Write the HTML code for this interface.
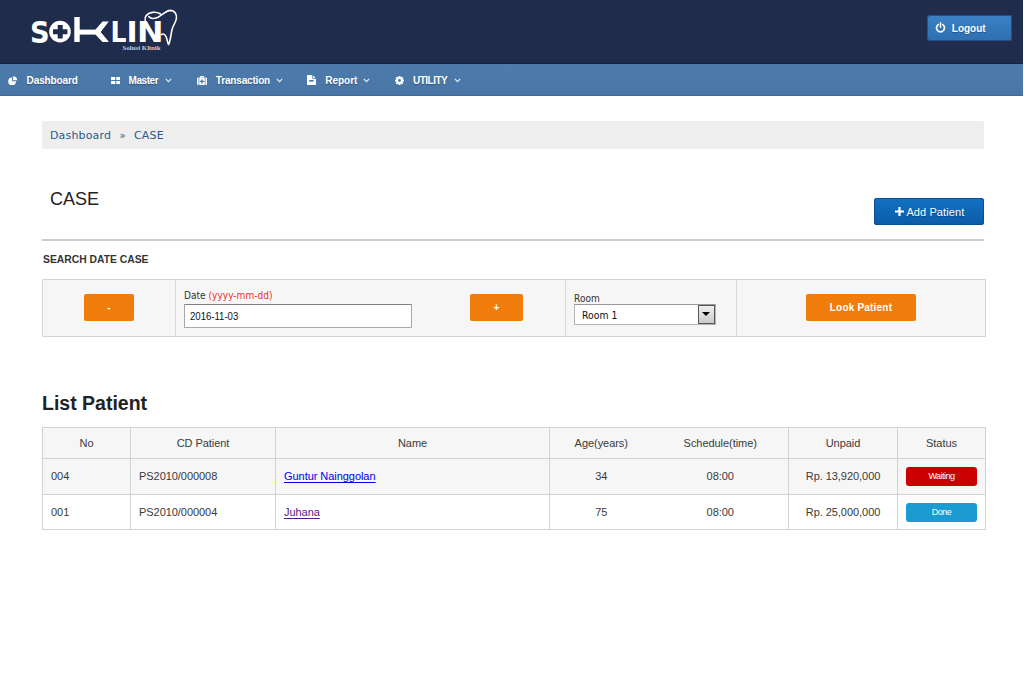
<!DOCTYPE html>
<html lang="en">
<head>
<meta charset="utf-8">
<title>SOKLIN - CASE</title>
<style>
html,body{margin:0;padding:0;background:#fff;}
body{width:1024px;height:680px;position:relative;overflow:hidden;font-family:"Liberation Sans",Arial,sans-serif;font-size:11px;color:#333;}
.abs{position:absolute;}
#header{left:0;top:0;width:1023px;height:64px;background:#1f2c4c;border-bottom:1px solid #18213c;box-sizing:border-box;}
#nav{left:0;top:64px;width:1023px;height:32px;background:linear-gradient(#4d7bac,#4875a5);border-bottom:1px solid #3e6a99;box-sizing:border-box;}
#nav .item{position:absolute;top:1.3px;height:30px;line-height:32px;color:#fff;font-weight:bold;font-size:10px;white-space:nowrap;text-shadow:0 1px 1px rgba(0,0,0,.3);}
#nav svg.ic{position:absolute;}
#logout{left:927px;top:15px;width:85px;height:26px;border-radius:3px;background:linear-gradient(#3a82c4,#2d6fb0);box-shadow:0 0 0 1px #24508a inset;color:#fff;font-weight:bold;font-size:10px;line-height:26px;text-shadow:0 1px 1px rgba(0,0,0,.3);}
#crumb{left:42px;top:121px;width:942px;height:28px;background:#eee;border-radius:2px;font-family:"DejaVu Sans",Verdana,sans-serif;font-size:11px;letter-spacing:.15px;color:#2c5a89;line-height:29.6px;}
#h1{left:50px;top:187px;font-size:18px;color:#222;line-height:24px;}
#add{left:874px;top:198px;width:110px;height:27px;border-radius:3px;background:linear-gradient(#1272c4,#0a5ba6);box-shadow:0 0 0 1px #0a4f92 inset;color:#fff;font-size:11px;line-height:27px;text-align:center;}
#hr{left:42px;top:239px;width:942px;height:2px;background:#ccc;}
#sdc{left:43px;top:251.3px;font-weight:bold;font-size:11px;line-height:16px;color:#333;transform:scale(.94,1.04);transform-origin:0 50%;white-space:nowrap;}
#stable{left:42px;top:279px;width:944px;height:58px;box-sizing:border-box;border:1px solid #d4d4d4;background:#f6f6f6;}
.vline{position:absolute;top:280px;width:1px;height:56px;background:#d9d9d9;}
.obtn{position:absolute;background:#f07c0b;border-radius:2px;color:#fff;font-weight:bold;font-size:10px;text-align:center;}
#lp{left:42px;top:389.7px;font-size:19.5px;font-weight:bold;color:#222;line-height:26px;}
#ltable{left:42px;top:427px;width:943px;height:102px;}

.lbl{position:absolute;font-family:"DejaVu Sans",Verdana,sans-serif;font-size:9.7px;color:#333;line-height:14px;white-space:nowrap;transform:scaleX(.935);transform-origin:0 50%;}
#dinput{left:184px;top:303.5px;width:228px;height:24px;box-sizing:border-box;border:1px solid #a8a8a8;border-top-color:#808080;background:#fff;border-radius:1px;}
#dinput span{position:absolute;left:4.8px;top:1.6px;line-height:22px;font-family:"Liberation Sans",Arial,sans-serif;font-size:10.2px;color:#111;transform:scaleX(.94);transform-origin:0 50%;}
#sel{left:574px;top:304px;width:142px;height:20.5px;box-sizing:border-box;border:1px solid #b5b5b5;border-top-color:#9a9a9a;background:#fff;}
#sel span{position:absolute;left:7.4px;top:1.6px;line-height:18px;font-family:"DejaVu Sans",Verdana,sans-serif;font-size:10px;color:#111;transform:scaleX(.93);transform-origin:0 50%;}
#sel i{position:absolute;right:0;top:0;width:17px;height:18.5px;box-sizing:border-box;border:1px solid #555;background:linear-gradient(#eee,#ccc);}
#sel i:after{content:"";position:absolute;left:3px;top:6px;border:4px solid transparent;border-top:4px solid #000;border-bottom:0;}
#ltable{border-collapse:collapse;table-layout:fixed;}
#ltable td,#ltable th{border:1px solid #d2d2d2;font-weight:normal;font-size:11px;color:#3a3a3a;padding:0;height:35px;letter-spacing:-.05px;}
#ltable th{height:30px;background:#f6f6f6;text-align:center;}
#ltable tr.odd td{background:#f6f6f6;}
#ltable td.l{text-align:left;padding-left:8px;}
#ltable td.c{text-align:center;}
#ltable td>span.t,#ltable td>a{position:relative;top:-1px;}
#ltable tr.last td>span.t,#ltable tr.last td>a{top:0;}
#ltable .nb{border-right:none;} #ltable .nbl{border-left:none;}
#ltable a{color:#0000ee;text-decoration:underline;text-decoration-skip-ink:none;text-underline-offset:1.5px;}
#ltable tr.last td{height:34px;}
#ltable a.v{color:#551a8b;}
.badge{display:block;margin:0 auto;width:71px;height:19px;line-height:19px;border-radius:3px;color:#fff;font-size:9px;letter-spacing:-.5px;text-align:center;}
</style>
</head>
<body>
<div id="header" class="abs"></div>

<svg id="logo" class="abs" style="left:0;top:0;" width="200" height="64" viewBox="0 0 200 64" role="img" aria-label="SOKLIN Solusi Klinik">
<title>SOKLIN Solusi Klinik</title>
<g fill="#fff" font-family="'DejaVu Sans','Liberation Sans',sans-serif" font-weight="bold" font-size="28.8px">
<text id="lS" transform="translate(30.1,42.5) scale(0.92,1)" font-size="29.6px">S</text>
<circle cx="60" cy="31.6" r="10.8"/>
<path d="M53 29.3h4.7v-4.4h5v4.4h4.7v5h-4.7v4.3h-5v-4.3h-4.7z" fill="#1f2c4c"/>
<rect x="74.3" y="17" width="5.4" height="25"/>
<rect x="79" y="29.6" width="18.5" height="5"/>
<path d="M95.4 29.7 L102.5 21.6 H108.8 L100.7 32.1 L109 42 H102.5 L95.4 34.6 Z"/>
<text id="lL" transform="translate(110.4,42.2) scale(0.87,1)">L</text>
<text id="lI" transform="translate(126.6,42.2) scale(1.04,1)">I</text>
<text id="lN" transform="translate(136.9,42.2) scale(1.1,1)">N</text>
</g>
<path d="M145.2 20.2 C144.2 16.5 147.5 13 152.5 12.4 C156 12 158.5 12.8 160.2 13.8 M148.8 16.6 C150.5 18.8 154.5 18.8 158 17.2 C162 15.2 166 10.6 170.5 10.4 C174.5 10.4 177 14 176.4 18.5 C175.8 22.5 173.3 25 172.2 29 C170.8 34 170.6 41 168.6 44.5 C167.4 42.5 167.2 39.5 166.2 37 C165.2 34.5 163.4 33.2 161.2 34.6" fill="none" stroke="#fff" stroke-width="1.6" stroke-linecap="round" stroke-linejoin="round"/>
<text x="122.6" y="49.6" font-family="'Liberation Serif',serif" font-weight="bold" font-size="6.4px" fill="#c8ccd6" textLength="38" lengthAdjust="spacingAndGlyphs">Solusi Klinik</text>
</svg>
<div id="logout" class="abs"><svg class="abs" style="left:8px;top:7px;" width="11" height="11" viewBox="0 0 11 11"><path d="M3.2 2.6 A4 4 0 1 0 7.8 2.6" fill="none" stroke="#fff" stroke-width="1.7" stroke-linecap="round"/><path d="M5.5 0.8V5.2" stroke="#fff" stroke-width="1.5" stroke-linecap="round"/></svg><span class="abs" style="left:24.8px;top:1px;">Logout</span></div>
<div id="nav" class="abs">
  <svg class="ic" style="left:7.6px;top:11.6px;" width="9.8" height="9.8" viewBox="0 0 11 11"><path d="M4.6 1.6 A4.4 4.4 0 1 0 9 6 H4.6 Z" fill="#fff"/><path d="M5.7 0.3 A4.6 4.6 0 0 1 10.3 4.9 H5.7 Z" fill="#fff"/></svg>
  <div class="item" style="left:26.6px;letter-spacing:-.12px;">Dashboard</div>
  <svg class="ic" style="left:110.6px;top:12.9px;" width="9.8" height="7.6" viewBox="0 0 10 8" preserveAspectRatio="none"><path d="M0 0h4.4v3.2h-4.4zM5.4 0h4.6v3.2h-4.6zM0 4.2h4.4v3.3h-4.4zM5.4 4.2h4.6v3.3h-4.6z" fill="#fff"/></svg>
  <div class="item" style="left:128.6px;letter-spacing:-.45px;">Master</div>
  <svg class="ic" style="left:164.9px;top:14.3px;" width="7" height="5" viewBox="0 0 7 5"><path d="M0.8 0.8 L3.5 3.6 L6.2 0.8" fill="none" stroke="#e8eef6" stroke-width="1.2"/></svg>
  <svg class="ic" style="left:197px;top:12px;" width="10" height="9" viewBox="0 0 10 9"><path d="M3 1.6V0.7Q3 0 3.7 0H6.3Q7 0 7 0.7V1.6H9Q10 1.6 10 2.6V8Q10 9 9 9H1Q0 9 0 8V2.6Q0 1.6 1 1.6ZM3.9 0.9V1.6H6.1V0.9Z" fill="#fff" fill-rule="evenodd"/><path d="M1.9 1.6V9M8.1 1.6V9" stroke="#4a78a8" stroke-width="0.7"/><path d="M4.3 3.4h1.4v1.3h1.3v1.4h-1.3v1.3h-1.4v-1.3h-1.3v-1.4h1.3z" fill="#4a78a8"/></svg>
  <div class="item" style="left:215.8px;letter-spacing:-.17px;">Transaction</div>
  <svg class="ic" style="left:276.2px;top:14.3px;" width="7" height="5" viewBox="0 0 7 5"><path d="M0.8 0.8 L3.5 3.6 L6.2 0.8" fill="none" stroke="#e8eef6" stroke-width="1.2"/></svg>
  <svg class="ic" style="left:307px;top:11px;" width="9" height="10" viewBox="0 0 9 10"><path d="M0.6 0H5.6L9 3.4V9.4Q9 10 8.4 10H0.6Q0 10 0 9.4V0.6Q0 0 0.6 0Z" fill="#fff"/><path d="M5.6 0V3.4H9" fill="none" stroke="#4a78a8" stroke-width="0.8"/><rect x="2.2" y="5" width="4.4" height="1.6" fill="#4a78a8"/></svg>
  <div class="item" style="left:325.2px;letter-spacing:0;">Report</div>
  <svg class="ic" style="left:363.2px;top:14.3px;" width="7" height="5" viewBox="0 0 7 5"><path d="M0.8 0.8 L3.5 3.6 L6.2 0.8" fill="none" stroke="#e8eef6" stroke-width="1.2"/></svg>
  <svg class="ic" style="left:395px;top:12px;" width="9" height="9" viewBox="-4.5 -4.5 9 9"><g fill="#fff"><circle r="3.2"/><g id="teeth"><rect x="-1" y="-4.5" width="2" height="9"/><rect x="-4.5" y="-1" width="9" height="2"/></g><use href="#teeth" transform="rotate(45)"/></g><circle r="1.4" fill="#4a78a8"/></svg>
  <div class="item" style="left:413px;letter-spacing:-.5px;">UTILITY</div>
  <svg class="ic" style="left:454.2px;top:14.3px;" width="7" height="5" viewBox="0 0 7 5"><path d="M0.8 0.8 L3.5 3.6 L6.2 0.8" fill="none" stroke="#e8eef6" stroke-width="1.2"/></svg>
</div>
<div id="crumb" class="abs"><span class="abs" style="left:8px;">Dashboard</span><span class="abs" style="left:77.5px;font-size:10px;">»</span><span class="abs" style="left:92px;">CASE</span></div>
<div id="h1" class="abs">CASE</div>
<div id="add" class="abs"><svg class="abs" style="left:21px;top:9.4px;" width="9" height="9" viewBox="0 0 9 9"><path d="M3.4 0h2.2v3.4h3.4v2.2h-3.4v3.4h-2.2v-3.4h-3.4v-2.2h3.4z" fill="#fff"/></svg><span class="abs" style="left:32.4px;top:1.2px;letter-spacing:.1px;white-space:nowrap;text-shadow:0 1px 1px rgba(0,0,0,.3);">Add Patient</span></div>
<div id="hr" class="abs"></div>
<div id="sdc" class="abs">SEARCH DATE CASE</div>
<div id="stable" class="abs"></div>
<div class="vline" style="left:175px;"></div>
<div class="vline" style="left:565px;"></div>
<div class="vline" style="left:736px;"></div>
<div class="obtn" style="left:84px;top:294.4px;width:50px;height:26.4px;line-height:28px;">-</div>
<div class="obtn" style="left:470px;top:294.4px;width:53px;height:26.4px;line-height:28px;">+</div>
<div class="obtn" style="left:806px;top:294.4px;width:110px;height:26.4px;line-height:28.4px;letter-spacing:.2px;">Look Patient</div>
<div id="lp" class="abs">List Patient</div>

<div class="lbl" style="left:184.3px;top:288.9px;">Date <span style="color:#e8322a;">(yyyy-mm-dd)</span></div>
<div id="dinput" class="abs"><span>2016-11-03</span></div>
<div class="lbl" style="left:574px;top:291.5px;">Room</div>
<div id="sel" class="abs"><span>Room 1</span><i></i></div>
<table id="ltable" class="abs">
<colgroup><col style="width:88px"><col style="width:145px"><col style="width:274px"><col style="width:103px"><col style="width:136px"><col style="width:109px"><col style="width:88px"></colgroup>
<tr><th><span>No</span></th><th><span>CD Patient</span></th><th><span>Name</span></th><th class="nb"><span>Age(years)</span></th><th class="nbl"><span>Schedule(time)</span></th><th><span>Unpaid</span></th><th><span>Status</span></th></tr>
<tr class="odd"><td class="l"><span class="t">004</span></td><td class="l"><span class="t">PS2010/000008</span></td><td class="l"><a>Guntur Nainggolan</a></td><td class="c nb"><span class="t">34</span></td><td class="c nbl"><span class="t">08:00</span></td><td class="c"><span class="t">Rp. 13,920,000</span></td><td><span class="badge" style="background:#cc0000;">Waiting</span></td></tr>
<tr class="last"><td class="l"><span class="t">001</span></td><td class="l"><span class="t">PS2010/000004</span></td><td class="l"><a class="v">Juhana</a></td><td class="c nb"><span class="t">75</span></td><td class="c nbl"><span class="t">08:00</span></td><td class="c"><span class="t">Rp. 25,000,000</span></td><td><span class="badge" style="background:#1a9cd2;">Done</span></td></tr>
</table>
</body>
</html>
